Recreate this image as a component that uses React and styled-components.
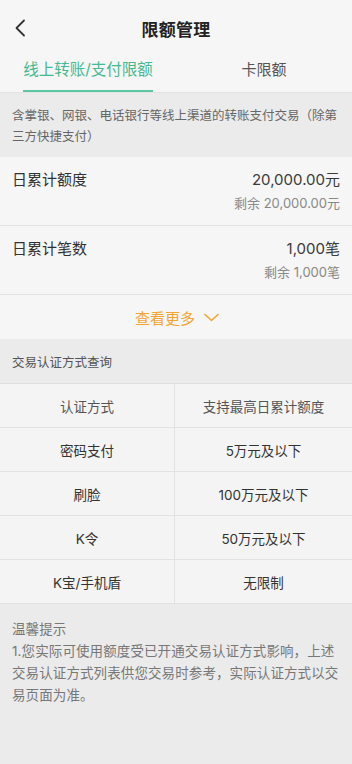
import React from "react";
import styled, { createGlobalStyle } from "styled-components";

const Global = createGlobalStyle`
  html, body { margin: 0; padding: 0; background: #ebebeb; }
  body { font-family: "Inter", "Noto Sans CJK SC", "Noto Sans", sans-serif; -webkit-font-smoothing: antialiased; }
  * { box-sizing: border-box; }
`;

const Page = styled.div`
  width: 352px;
  min-height: 764px;
  background: #ebebeb;
  color: #333;
`;

const Header = styled.div`
  height: 50px;
  background: #f6f6f6;
  display: flex;
  align-items: center;
  justify-content: center;
  position: relative;
`;

const Back = styled.button`
  position: absolute;
  left: 8px;
  top: 16px;
  width: 24px;
  height: 24px;
  padding: 0;
  border: 0;
  background: none;
  display: flex;
  align-items: center;
  justify-content: center;
`;

const Title = styled.h1`
  margin: 6px 0 0;
  font-size: 17px;
  font-weight: 700;
  color: #222;
  letter-spacing: 0.2px;
`;

const Tabs = styled.div`
  display: flex;
  height: 43px;
  background: #f6f6f6;
  border-bottom: 1px solid #e3e3e3;
`;

const Tab = styled.div`
  flex: 1;
  display: flex;
  justify-content: center;
`;

const TabLabel = styled.span`
  display: block;
  height: 100%;
  font-size: ${(p) => (p.$active ? "15.5px" : "15px")};
  line-height: 40px;
  color: ${(p) => (p.$active ? "#45b98f" : "#555")};
  border-bottom: 2px solid ${(p) => (p.$active ? "#5cc7a0" : "transparent")};
`;

const Notice = styled.p`
  margin: 0;
  padding: 12px 12px 10px;
  font-size: 12.5px;
  line-height: 21px;
  color: #666;
`;

const LimitRow = styled.div`
  background: #f6f6f6;
  padding: 12px;
  display: flex;
  justify-content: space-between;
  border-bottom: 1px solid #e2e2e2;
`;

const RowLabel = styled.div`
  font-size: 15px;
  line-height: 22px;
  color: #333;
`;

const RowValues = styled.div`
  display: flex;
  flex-direction: column;
  align-items: flex-end;
  gap: 2px;
`;

const Amount = styled.div`
  font-size: 15px;
  line-height: 22px;
  color: #3a3a3a;
`;

const Remain = styled.div`
  font-size: 13px;
  line-height: 20px;
  color: #888;
`;

const MoreRow = styled.div`
  height: 44px;
  background: #f6f6f6;
  display: flex;
  align-items: center;
  justify-content: center;
  gap: 9px;
  color: #f2a531;
  font-size: 15px;
  padding-left: 2px;
`;

const SectionTitle = styled.div`
  height: 45px;
  padding: 0 12px;
  display: flex;
  align-items: center;
  font-size: 12.5px;
  color: #555;
  border-bottom: 1px solid #e0e0e0;
`;

const Table = styled.div`
  display: grid;
  grid-template-columns: 175px 1fr;
  background: #f4f4f4;
`;

const Cell = styled.div`
  height: 44px;
  display: flex;
  align-items: center;
  justify-content: center;
  font-size: 13.5px;
  color: ${(p) => (p.$head ? "#555" : "#333")};
  border-bottom: 1px solid #e2e2e2;
  border-right: ${(p) => (p.$left ? "1px solid #e2e2e2" : "none")};
`;

const Tips = styled.div`
  padding: 14px 12px 0;
  font-size: 13.5px;
  line-height: 22px;
  color: #777;
  letter-spacing: 0.1px;
`;

const ChevronLeft = () => (
  <svg width="12" height="18" viewBox="0 0 12 18" fill="none">
    <polyline points="10,1.5 2.5,9 10,16.5" stroke="#333" strokeWidth="1.8" strokeLinecap="round" strokeLinejoin="round" />
  </svg>
);

const ChevronDown = () => (
  <svg width="15" height="9" viewBox="0 0 15 9" fill="none">
    <polyline points="1,1.5 7.5,7.5 14,1.5" stroke="#f2a531" strokeWidth="1.6" strokeLinecap="round" strokeLinejoin="round" />
  </svg>
);

const limits = [
  { label: "日累计额度", amount: "20,000.00元", remain: "剩余 20,000.00元" },
  { label: "日累计笔数", amount: "1,000笔", remain: "剩余 1,000笔" },
];

const table = [
  ["密码支付", "5万元及以下"],
  ["刷脸", "100万元及以下"],
  ["K令", "50万元及以下"],
  ["K宝/手机盾", "无限制"],
];

export default function App() {
  return (
    <Page>
      <Global />
      <Header>
        <Back aria-label="返回"><ChevronLeft /></Back>
        <Title>限额管理</Title>
      </Header>
      <Tabs>
        <Tab><TabLabel $active>线上转账/支付限额</TabLabel></Tab>
        <Tab><TabLabel>卡限额</TabLabel></Tab>
      </Tabs>
      <Notice>含掌银、网银、电话银行等线上渠道的转账支付交易（除第三方快捷支付）</Notice>
      {limits.map((l) => (
        <LimitRow key={l.label}>
          <RowLabel>{l.label}</RowLabel>
          <RowValues>
            <Amount>{l.amount}</Amount>
            <Remain>{l.remain}</Remain>
          </RowValues>
        </LimitRow>
      ))}
      <MoreRow>查看更多 <ChevronDown /></MoreRow>
      <SectionTitle>交易认证方式查询</SectionTitle>
      <Table>
        <Cell $head $left>认证方式</Cell>
        <Cell $head>支持最高日累计额度</Cell>
        {table.map(([a, b]) => (
          <React.Fragment key={a}>
            <Cell $left>{a}</Cell>
            <Cell>{b}</Cell>
          </React.Fragment>
        ))}
      </Table>
      <Tips>
        温馨提示
        <br />
        1.您实际可使用额度受已开通交易认证方式影响，上述交易认证方式列表供您交易时参考，实际认证方式以交易页面为准。
      </Tips>
    </Page>
  );
}
